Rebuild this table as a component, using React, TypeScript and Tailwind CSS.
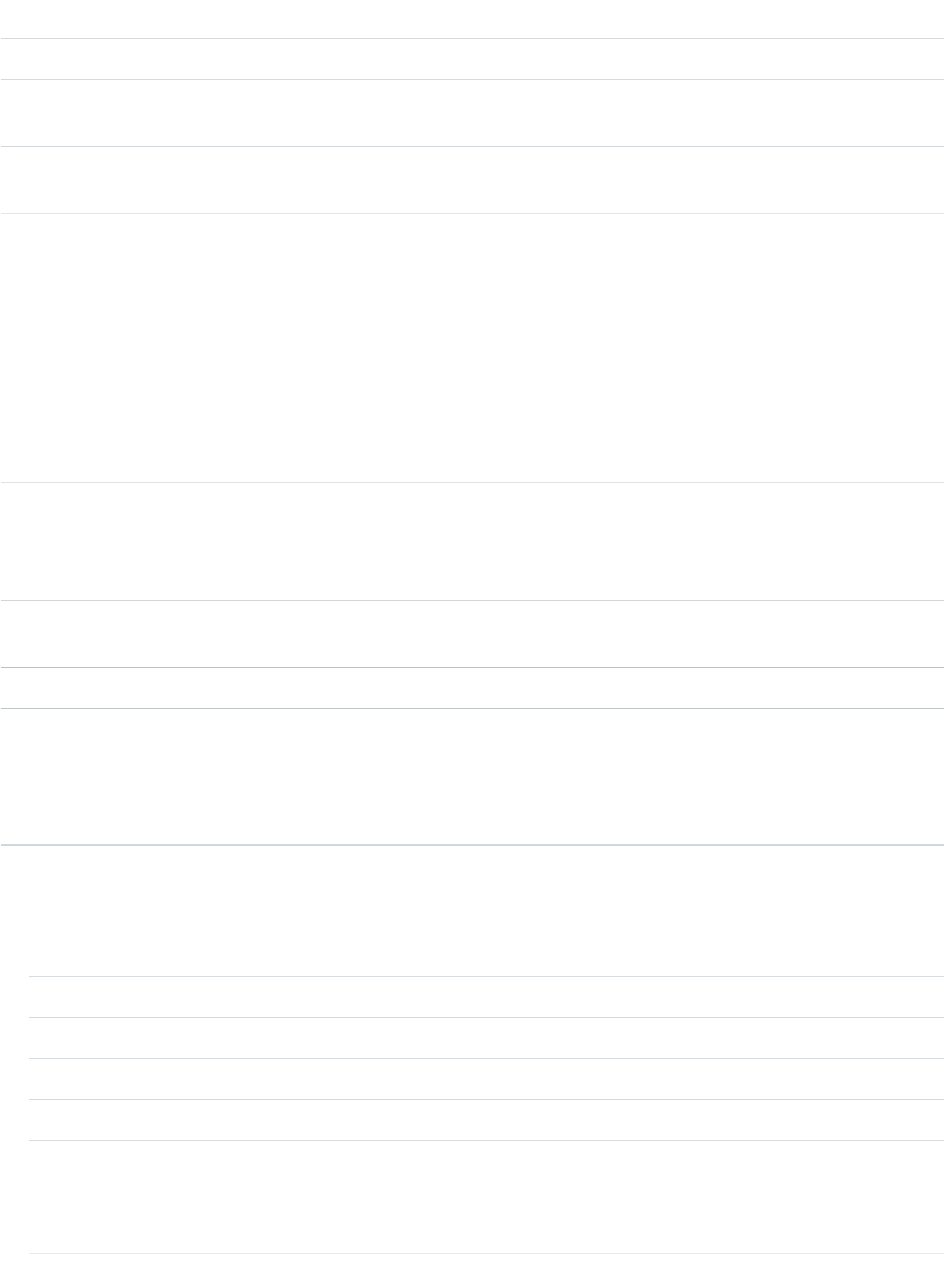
export default function App() {
  return (
    <main className="min-h-[1282px] w-full bg-white px-px">
      {/* top section */}
      <div className="flex flex-col">
        <div className="h-[39px] border-b border-[#d3dae0]" />
        <div className="h-[41px] border-b border-[#d3dae0]" />
        <div className="h-[67px] border-b border-[#d0d9e0]" />
        <div className="h-[67px] border-b border-[#e3e7ea]" />
        <div className="h-[269px] border-b border-[#dde2e6]" />
        <div className="h-[118px] border-b border-[#cdd6dc]" />
        <div className="h-[67px] border-b border-[#b7c1c7]" />
        <div className="h-[41px] border-b border-[#b9c7ca]" />
        <div className="h-[137px] border-b-2 border-[#cfd9dc]" />
      </div>

      {/* indented list */}
      <div className="flex flex-col pl-[28px]">
        <div className="h-[131px] border-b border-[#d3dde3]" />
        <div className="h-[41px] border-b border-[#d3dade]" />
        <div className="h-[41px] border-b border-[#d3dde3]" />
        <div className="h-[41px] border-b border-[#d3dade]" />
        <div className="h-[41px] border-b border-[#d3dde3]" />
        <div className="h-[113px] border-b border-[#e6eaed]" />
      </div>
    </main>
  )
}
